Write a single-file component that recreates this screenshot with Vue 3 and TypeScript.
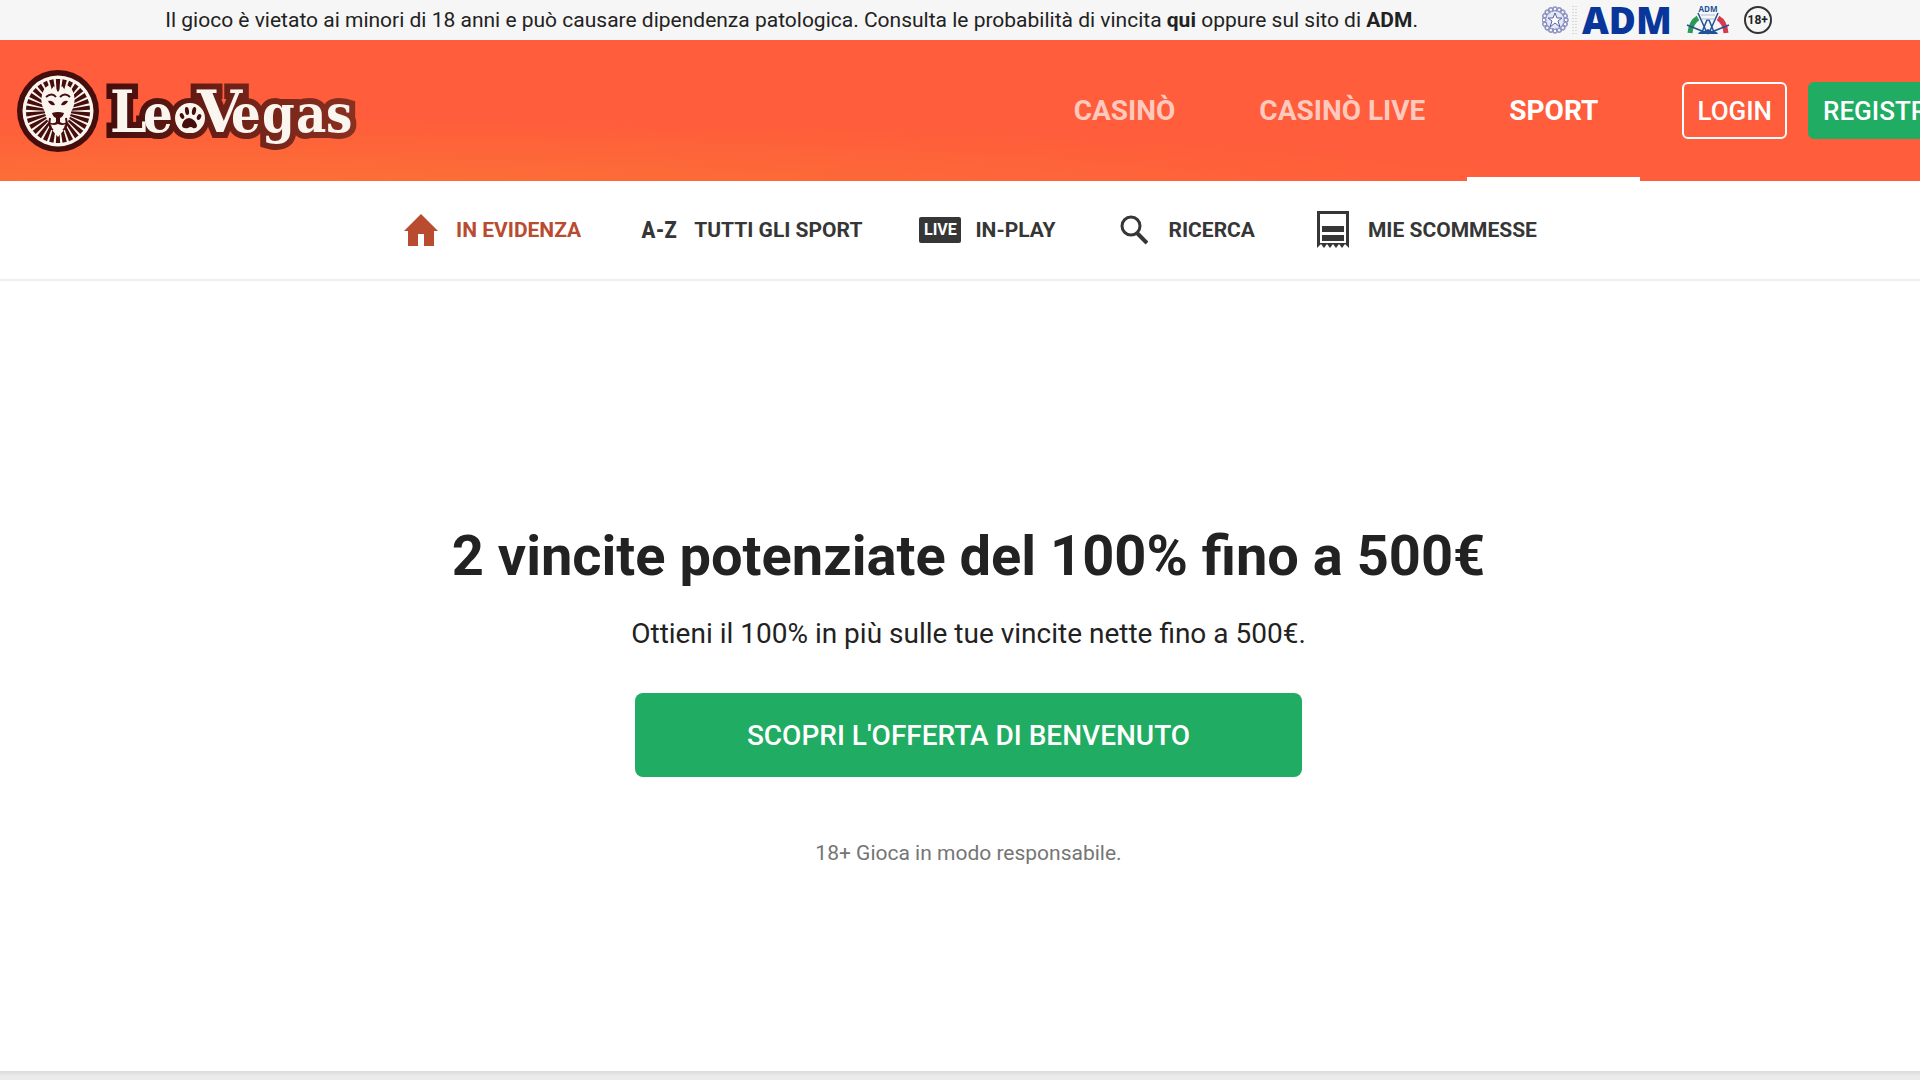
<script setup lang="ts">
interface NavLink {
  label: string
  active?: boolean
}

const products: NavLink[] = [
  { label: 'CASINÒ' },
  { label: 'CASINÒ LIVE' },
  { label: 'SPORT', active: true },
]

// Angles of the mane's rays and of the leaves in the state emblem
const rays = Array.from({ length: 30 }, (_, i) => i * 12)
const wreath = Array.from({ length: 16 }, (_, i) => i * 22.5)
</script>

<template>
  <div class="page">
    <div class="legal">
      <p class="legal-text">
        Il gioco è vietato ai minori di 18 anni e può causare dipendenza patologica. Consulta le probabilità di vincita
        <a href="#"><b>qui</b></a> oppure sul sito di <a href="#"><b>ADM</b></a>.
      </p>
      <div class="seals">
        <svg class="emblem" viewBox="0 0 36 30" width="36" height="30" aria-hidden="true">
          <g fill="none" stroke="#8d93c4" stroke-width="1.5">
            <circle v-for="a in wreath" :key="a" cx="13" cy="4" r="2" :transform="`rotate(${a} 13 15)`" />
          </g>
          <circle cx="13" cy="15" r="9" fill="#e4e7f4" stroke="#8a90c0" stroke-dasharray="2 1" />
          <path d="M13 8l2 5h5l-4 3 2 6-5-4-5 4 2-6-4-3h5z" fill="#fff" stroke="#5962a5" />
          <path d="M31 1v28M34 1v28" stroke="#bbb" stroke-dasharray="1 2" />
        </svg>
        <span class="adm">ADM</span>
        <svg class="fan" viewBox="0 0 44 34" width="44" height="34" aria-hidden="true">
          <path d="M4 30Q5 19 12 15" fill="none" stroke="#2c9a54" stroke-width="5" />
          <path d="M40 30Q39 19 32 15" fill="none" stroke="#d5394f" stroke-width="5" />
          <path d="M1 22l20 8L12 10M43 22l-20 8 9-20M16 29l5-12h2l5 12" fill="none" stroke="#1f5299" stroke-width="1.5" />
          <path d="M15 12h14M16 16h12" stroke="#a9bdd8" />
          <path d="M12 31q1-3 6-3l4-2 4 2q5 0 6 3z" fill="#1f5299" />
          <text x="22" y="9" text-anchor="middle">ADM</text>
        </svg>
        <span class="age">18+</span>
      </div>
    </div>

    <header class="header">
      <a class="logo" href="#" aria-label="LeoVegas">
        <svg viewBox="0 0 344 86" width="344" height="86" aria-hidden="true">
          <defs>
            <linearGradient id="rim" gradientUnits="userSpaceOnUse" x1="90" y1="0" x2="340" y2="0">
              <stop offset="0" stop-color="#450d0c" />
              <stop offset="0.5" stop-color="#6f2117" />
              <stop offset="1" stop-color="#8a3020" />
            </linearGradient>
          </defs>
          <circle cx="41" cy="43" r="41" fill="#450d0c" />
          <circle cx="41" cy="43" r="35.5" fill="#fbf5ef" />
          <path v-for="a in rays" :key="a" d="M40 30L38.8 11h4.4L42 30z" fill="#450d0c" :transform="`rotate(${a} 41 43)`" />
          <path d="M28 20l4-3 2 5 3-4 4 6 4-6 3 4 2-5 4 3c4 6 4 12 3 17-1 4-3 6-4 10 0 4-2 7-5 9l-1 6-6 7-6-7-1-6c-3-2-5-5-5-9-1-4-3-6-4-10-1-5-1-11 3-17z" fill="#fbf5ef" />
          <path d="M29 29q6-5 10 0M43 29q5-5 10 0" fill="none" stroke="#450d0c" stroke-width="2" />
          <path d="M31 33q5-1 7 4-5 1-7-4zM51 33q-5-1-7 4 5 1 7-4z" fill="#450d0c" />
          <path d="M35 45q6-2 12 0-1 4-4 5v4q4 3 8-1-3 6-10 3-7 3-10-3 4 4 8 1v-4q-3-1-4-5z" fill="#450d0c" />
          <path d="M33 50q-2 9 3 12M49 50q2 9-3 12" fill="none" stroke="#450d0c" stroke-width="2" />
          <use href="#wordmark" class="rim" />
          <g class="letters">
            <text id="wordmark" y="64"><tspan class="cap" x="93">L</tspan><tspan x="126 157">eo</tspan><tspan class="cap wide" x="180">V</tspan><tspan x="214 245 279 309">egas</tspan></text>
          </g>
          <circle cx="173" cy="50" r="15" fill="#fbf5ef" />
          <g fill="#450d0c">
            <path d="M165 57q1-6 7-7 6 1 8 7 0 4-4 3-2-2-5 0-6 1-6-3z" />
            <ellipse cx="165" cy="48" rx="2" ry="3" transform="rotate(-25 165 48)" />
            <ellipse cx="170" cy="43" rx="2" ry="4" transform="rotate(-8 170 43)" />
            <ellipse cx="177" cy="43" rx="2" ry="4" transform="rotate(12 177 43)" />
            <ellipse cx="182" cy="49" rx="2" ry="3" transform="rotate(28 182 49)" />
          </g>
        </svg>
      </a>
      <nav class="products">
        <a v-for="p in products" :key="p.label" href="#" :class="{ active: p.active }">{{ p.label }}</a>
      </nav>
      <button class="btn login" type="button">LOGIN</button>
      <button class="btn register" type="button">REGISTRATI</button>
    </header>

    <nav class="subnav">
      <a class="current" href="#">
        <span class="icon"><svg viewBox="0 0 34 32" width="34" height="32" aria-hidden="true"><path d="M17 0L0 17h4v15h10V20h6v12h10V17h4z" fill="currentColor" /></svg></span>
        IN EVIDENZA
      </a>
      <a href="#"><span class="icon az">A-Z</span>TUTTI GLI SPORT</a>
      <a href="#"><span class="icon live">LIVE</span>IN-PLAY</a>
      <a href="#">
        <span class="icon"><svg viewBox="0 0 28 32" width="28" height="32" aria-hidden="true"><g fill="none" stroke="currentColor" stroke-width="3"><circle cx="11" cy="12" r="9" /><path d="M17 19l10 10" stroke-width="4" /></g></svg></span>
        RICERCA
      </a>
      <a href="#">
        <span class="icon"><svg viewBox="0 0 32 38" width="32" height="38" aria-hidden="true"><path fill-rule="evenodd" fill="currentColor" d="M0 0h32v37l-4-4-3 4-3-4-3 4-3-4-3 4-3-4-3 4-3-4-4 4zM3 3v29h26V3zM5 15h22v6H5zM5 24h22v6H5z" /></svg></span>
        MIE SCOMMESSE
      </a>
    </nav>

    <main class="hero">
      <h1>2 vincite potenziate del 100% fino a 500€</h1>
      <p class="lead">Ottieni il 100% in più sulle tue vincite nette fino a 500€.</p>
      <button class="cta" type="button">SCOPRI L'OFFERTA DI BENVENUTO</button>
      <p class="note">18+ Gioca in modo responsabile.</p>
    </main>
    <footer class="foot"></footer>
  </div>
</template>

<style>
body {
  background: #ebebeb;
}
</style>

<style scoped>
.page {
  display: flex;
  flex-direction: column;
  min-height: 100vh;
  overflow: hidden;
  color: #222;
  font-family: Roboto, sans-serif;
}
a {
  color: inherit;
  text-decoration: none;
}
p,
h1 {
  margin: 0;
}
.legal {
  display: flex;
  align-items: center;
  justify-content: center;
  gap: 124px;
  height: 40px;
  padding-left: 17px;
  background: #f6f6f6;
}
.legal-text {
  font-size: 21px;
  line-height: 38px;
  white-space: nowrap;
}
.seals {
  display: flex;
  align-items: center;
}
.adm {
  margin-left: 4px;
  color: #08369a;
  font: 800 37px/40px "Open Sans", sans-serif;
}
.fan {
  margin: 0 14px;
}
.fan text {
  fill: #1f5299;
  font: 700 8px "Open Sans", sans-serif;
}
.age {
  box-sizing: border-box;
  width: 28px;
  height: 28px;
  border: 2px solid #333;
  border-radius: 50%;
  font: 700 12px/24px Roboto, sans-serif;
  text-align: center;
}
.header {
  display: flex;
  align-items: center;
  height: 141px;
  background: radial-gradient(ellipse 75% 60% at 10% 115%, #fb7535, #ff5d3b);
}
.logo {
  flex: none;
  display: flex;
  margin-left: 17px;
}
.letters {
  fill: #fbf5ef;
}
.rim {
  fill: none;
  stroke: url(#rim);
  stroke-width: 12px;
}
#wordmark {
  font: 700 52px "DejaVu Serif Condensed", "DejaVu Serif", serif;
}
#wordmark .cap {
  font-size: 58px;
}
#wordmark .wide {
  font-family: "DejaVu Serif", serif;
}
.products {
  display: flex;
  align-self: stretch;
  margin-left: auto;
}
.products a {
  display: flex;
  align-items: center;
  padding: 0 42px;
  border: solid transparent;
  border-width: 4px 0;
  color: #ffcabd;
  font-size: 28px;
  font-weight: 700;
}
.products a.active {
  border-bottom-color: #fff;
  color: #fff;
}
.btn {
  flex: none;
  box-sizing: border-box;
  height: 57px;
  padding: 0 13px;
  border: 2px solid #fff;
  border-radius: 6px;
  background: none;
  color: #fff;
  font: 500 26px Roboto, sans-serif;
}
.login {
  margin-left: 42px;
}
.register {
  margin: 0 -61px 0 21px;
  border-color: #20ac62;
  background: #20ac62;
}
.subnav {
  display: flex;
  justify-content: center;
  gap: 57px;
  height: 98px;
  padding-left: 17px;
  border-bottom: 2px solid #eee;
  background: #fff;
  color: #363636;
  font-size: 21px;
  font-weight: 700;
}
.subnav a {
  display: flex;
  align-items: center;
  gap: 14px;
}
.subnav .current {
  color: #b94b31;
}
.icon {
  display: flex;
  justify-content: center;
  width: 42px;
}
.az {
  font: 700 24px "Roboto Condensed", Roboto, sans-serif;
}
.live {
  border-radius: 2px;
  background: #363636;
  color: #fff;
  font: 700 16px/26px Roboto, sans-serif;
}
.hero {
  flex: 1;
  display: flex;
  flex-direction: column;
  align-items: center;
  justify-content: center;
  padding: 40px 0 0 17px;
  background: #fff;
}
h1 {
  font-size: 56px;
  line-height: 66px;
}
.lead {
  margin-top: 28px;
  font-size: 28px;
  line-height: 34px;
}
.cta {
  width: 667px;
  height: 84px;
  margin-top: 42px;
  border: 0;
  border-radius: 8px;
  background: #20ac62;
  color: #fff;
  font: 500 28px Roboto, sans-serif;
}
.note {
  margin-top: 60px;
  color: #757575;
  font-size: 21px;
  line-height: 32px;
}
.foot {
  height: 9px;
  background: linear-gradient(#dadada, #ebebeb 5px);
}
</style>
